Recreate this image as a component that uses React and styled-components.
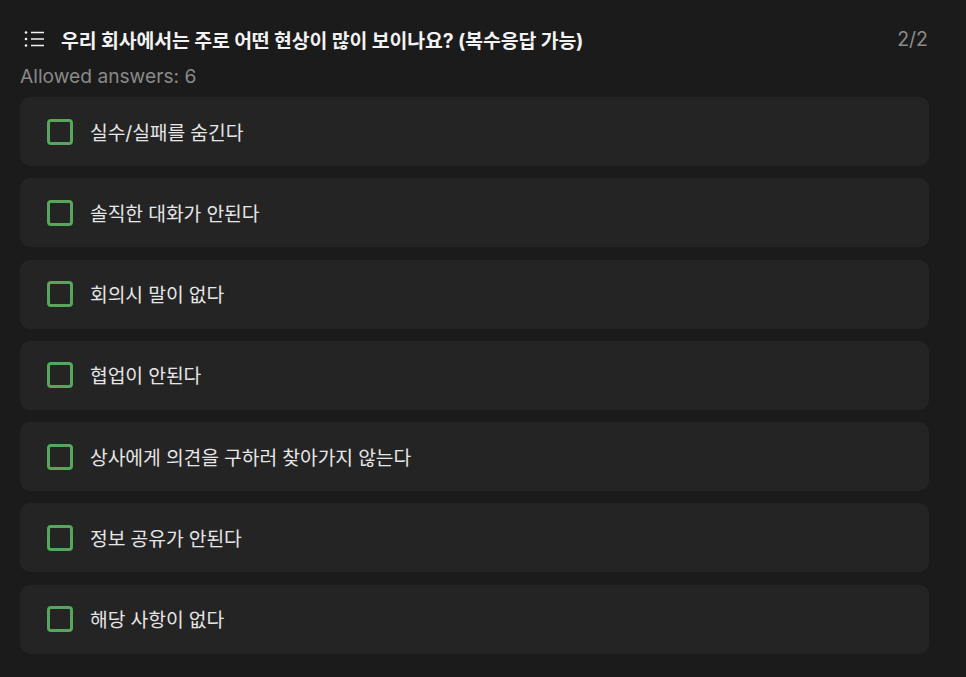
import React from "react";
import styled, { createGlobalStyle } from "styled-components";

const Global = createGlobalStyle`
  html, body {
    margin: 0;
    padding: 0;
    background: #1b1b1b;
  }
  body {
    font-family: Inter, "Noto Sans CJK KR", "Noto Sans", sans-serif;
    -webkit-font-smoothing: antialiased;
  }
`;

const Page = styled.div`
  width: 909px;
  padding: 22px 0 0 20px;
  display: flex;
  flex-direction: column;
`;

const Header = styled.div`
  display: flex;
  align-items: center;
  height: 34px;
  padding-left: 4px;
`;

const Title = styled.h2`
  flex: 1;
  margin: 0 0 0 16px;
  font-size: 19.4px;
  font-weight: 700;
  color: #f2f2f2;
  letter-spacing: -0.1px;
`;

const Counter = styled.span`
  font-size: 19.5px;
  color: #8c8c8c;
  padding-right: 1px;
`;

const Allowed = styled.div`
  font-size: 19.2px;
  color: #8a8a8a;
  margin-top: 7px;
  height: 26px;
  line-height: 26px;
`;

const List = styled.div`
  display: flex;
  flex-direction: column;
  gap: 12.3px;
  margin-top: 8px;
`;

const Card = styled.label`
  display: flex;
  align-items: center;
  height: 69px;
  padding-left: 27px;
  background: #242424;
  border-radius: 10px;
  cursor: pointer;
`;

const Box = styled.span`
  box-sizing: border-box;
  width: 26px;
  height: 26px;
  border: 3px solid #57a65b;
  border-radius: 4px;
  flex-shrink: 0;
`;

const Label = styled.span`
  margin-left: 17px;
  font-size: 19.3px;
  color: #e6e6e6;
  letter-spacing: -0.1px;
`;

const ListIcon = () => (
  <svg width="21" height="18" viewBox="0 0 21 18" fill="none">
    <circle cx="2" cy="2.5" r="1.3" fill="#f2f2f2" />
    <circle cx="2" cy="9" r="1.3" fill="#f2f2f2" />
    <circle cx="2" cy="15.5" r="1.3" fill="#f2f2f2" />
    <path d="M7 2.5H20M7 9H20M7 15.5H20" stroke="#f2f2f2" strokeWidth="1.6" />
  </svg>
);

const options = [
  "실수/실패를 숨긴다",
  "솔직한 대화가 안된다",
  "회의시 말이 없다",
  "협업이 안된다",
  "상사에게 의견을 구하러 찾아가지 않는다",
  "정보 공유가 안된다",
  "해당 사항이 없다",
];

export default function App() {
  return (
    <>
      <Global />
      <Page>
        <Header>
          <ListIcon />
          <Title>우리 회사에서는 주로 어떤 현상이 많이 보이나요? (복수응답 가능)</Title>
          <Counter>2/2</Counter>
        </Header>
        <Allowed>Allowed answers: 6</Allowed>
        <List>
          {options.map((o) => (
            <Card key={o}>
              <Box />
              <Label>{o}</Label>
            </Card>
          ))}
        </List>
      </Page>
    </>
  );
}
